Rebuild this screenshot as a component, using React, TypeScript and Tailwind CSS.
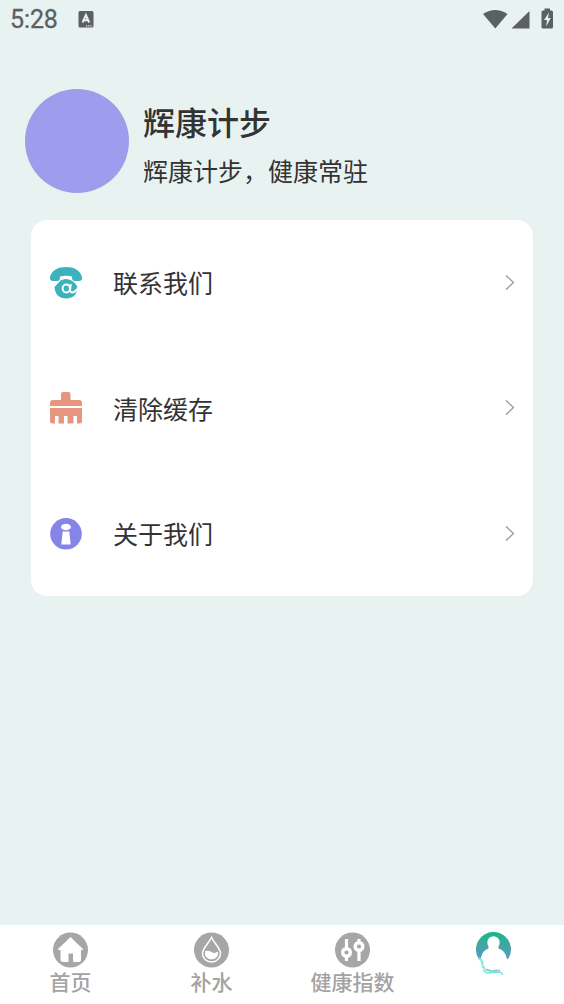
import type { ReactNode } from "react";

function StatusBar() {
  return (
    <header className="flex h-10 shrink-0 items-center justify-between pl-[10px] pr-[10px] text-[#5b6160]">
      <div className="flex items-center gap-5">
        <span className="font-[Roboto,sans-serif] text-[25px] leading-10 tracking-[-0.1px] [-webkit-text-stroke:0.3px_#5b6160]">5:28</span>
        <svg width="16" height="18" viewBox="0 0 16 18">
          <rect x="0.5" y="0" width="15" height="16.5" rx="1.5" fill="currentColor" />
          <path d="M4.6 11.5L7.9 4L11.2 11.5M5.7 9.200H10.1" fill="none" stroke="#e8f2f1" strokeWidth="2" />
          <path d="M8 14.8H14" stroke="#e8f2f1" strokeWidth="1.3" strokeDasharray="1.2 1" />
        </svg>
      </div>
      <svg className="mb-[3px]" width="71" height="22" viewBox="0 0 71 22" fill="currentColor">
        <path d="M0 6Q12.300-2 24.500 6L12.300 20.500Z" />
        <path d="M46.500 3V20.500H28.500Z" />
        <path d="M61.500 0.500H67V2.500H68.500Q70 2.500 70 4V19Q70 20.500 68.500 20.500H60Q58.500 20.500 58.500 19V4Q58.500 2.500 60 2.500H61.500Z" />
        <path d="M66 4.500L61 12H64L63.200 18.500L67.700 10H65Z" fill="#e8f2f1" />
      </svg>
    </header>
  );
}

function PhoneIcon() {
  return (
    <svg width="32" height="32" viewBox="0 0 32 32">
      <path d="M0 10C2 3 8 0 16 0S30 3 32 10C32.400 13 31 14 29 14H25C22.500 14 22 12.500 22 9.500Q16 8 10 9.500C10 12.500 9.500 14 7 14H3C1 14-.4 13 0 10Z" fill="#3bb3bd" />
      <path d="M10.500 13.500Q16 10.500 21.500 13.500Q26.500 16 27.500 21C27 28 22.500 31.500 16 31.500S5 27.500 4.500 20Z" fill="#3bb3bd" />
      <path d="M20.800 17L20 23.500Q20.800 26.300 24 25Q27 23.500 28.500 20.500" fill="none" stroke="#fff" strokeWidth="2" />
      <ellipse cx="16.300" cy="21.500" rx="3.700" ry="3.900" fill="none" stroke="#fff" strokeWidth="2" />
    </svg>
  );
}

function BrushIcon() {
  return (
    <svg width="32" height="32" viewBox="0 0 32 32" fill="#e6957f">
      <path d="M11 8V2Q11 0 13 0H18.500Q20.500 0 20.500 2V8H29Q32 8 32 11V14H0V11Q0 8 3 8Z" />
      <path d="M0 16H32V29Q32 31.500 29.500 31.500H27V24H23.500V31.500H17.500V24H14V31.500H8.500V24H5V31.500H2.500Q0 31.500 0 29Z" />
    </svg>
  );
}

function InfoIcon() {
  return (
    <svg width="32" height="32" viewBox="0 0 32 32">
      <circle cx="16" cy="15.800" r="15.800" fill="#8585e8" />
      <ellipse cx="16" cy="9" rx="5" ry="3.200" fill="#fff" />
      <path d="M12.700 13.500H19.300L20.700 26.500H11.300Z" fill="#fff" />
    </svg>
  );
}

function HomeIcon() {
  return (
    <svg width="36" height="36" viewBox="0 0 36 36">
      <circle cx="17.500" cy="18" r="17.500" fill="#a6a6a6" />
      <path d="M17.500 5.500L30 17.500H27.500V28Q27.500 29.500 26 29.500H20.500V21H15V29.500H9.500Q8 29.500 8 28V17.500H5Z" fill="#fff" stroke="#fff" strokeWidth="1" strokeLinejoin="round" />
    </svg>
  );
}

function WaterIcon() {
  return (
    <svg width="36" height="36" viewBox="0 0 36 36">
      <circle cx="17.500" cy="18" r="17.500" fill="#a6a6a6" />
      <path d="M17.500 5.500C14.500 11.500 8.500 16.500 8.500 21.500A9 8.500 0 0 0 26.500 21.500C26.500 16.500 20.500 11.500 17.500 5.500Z" fill="none" stroke="#fff" strokeWidth="1.500" />
      <path d="M11 19Q14.500 18 17.500 20T24 19.500Q25 27 17.500 27.500Q10 27 11 19Z" fill="#fff" />
    </svg>
  );
}

function HealthIcon() {
  return (
    <svg width="36" height="36" viewBox="0 0 36 36">
      <circle cx="17.500" cy="18" r="17.500" fill="#a6a6a6" />
      <path d="M11.500 7V17M11.500 24V29M24 7V11M24 18V29" stroke="#fff" strokeWidth="3.200" />
      <circle cx="11.500" cy="20.500" r="3.800" fill="none" stroke="#fff" strokeWidth="3.400" />
      <circle cx="24" cy="14.500" r="3.800" fill="none" stroke="#fff" strokeWidth="3.400" />
    </svg>
  );
}

function ProfileIcon() {
  return (
    <svg width="36" height="44" viewBox="0 0 36 44">
      <defs>
        <linearGradient id="profile" x1="0" y1="0" x2="0" y2="1">
          <stop offset="0" stopColor="#18b886" />
          <stop offset="0.450" stopColor="#3fa8a0" />
          <stop offset="1" stopColor="#5b98cc" />
        </linearGradient>
      </defs>
      <path d="M2.500 26.500A17.500 17.500 0 1 1 32.500 26.500L29 28H6Z" fill="url(#profile)" />
      <circle cx="17.500" cy="10.500" r="6.200" fill="#fff" />
      <path d="M12.500 14H22.500V16.500Q29 18 31 27L26 39H11L4.500 27Q6.500 18 12.500 16.500Z" fill="#fff" />
      <path d="M2.500 26L6 29L6.500 34L9.500 38" fill="none" stroke="#7ce9df" strokeWidth="2.200" strokeDasharray="4 0.500" />
      <path d="M7 38L11 41L24 40L27 42.500" fill="none" stroke="#70e5dc" strokeWidth="1.500" />
      <path d="M10 37.500L15 39L24 38.500" fill="none" stroke="#84cfc0" strokeWidth="2" strokeDasharray="6 0.500" />
    </svg>
  );
}

function MenuRow({ icon, label }: { icon: ReactNode; label: string }) {
  return (
    <button className="flex h-[125.5px] w-full items-center pl-[19px] pr-[18px] text-left">
      {icon}
      <span className="ml-[31px] flex-1 pb-[1px] text-[25px] leading-9">{label}</span>
      <svg width="10" height="16" viewBox="0 0 10 16" fill="none" stroke="#999" strokeWidth="1.3">
        <path d="M1 0.500L8.500 7.500L1 14.500" />
      </svg>
    </button>
  );
}

function Tab({ icon, label }: { icon: ReactNode; label?: string }) {
  return (
    <button className="flex flex-1 flex-col items-center pt-[7px] text-[21px] font-medium leading-[26px] text-[#a3a3a3]">
      {icon}
      {label && <span>{label}</span>}
    </button>
  );
}

export default function App() {
  return (
    <div className="flex h-[1004px] w-[564px] flex-col overflow-hidden bg-[#e8f2f1] font-['Noto_Sans_CJK_SC',sans-serif] text-[#333]">
      <StatusBar />

      {/* Account header */}
      <section className="mt-[49px] flex h-[104px] items-center pl-[25px]">
        <div className="size-[104px] rounded-full bg-[#9c9ded]" />
        <div className="ml-[14px] pt-[3px]">
          <h1 className="text-[32px] font-medium leading-[46px]">辉康计步</h1>
          <p className="mt-[8px] text-[25px] leading-9">辉康计步，健康常驻</p>
        </div>
      </section>

      {/* Settings */}
      <main className="mx-[31px] mt-[27px] h-[376px] rounded-2xl bg-white">
        <MenuRow icon={<PhoneIcon />} label="联系我们" />
        <MenuRow icon={<BrushIcon />} label="清除缓存" />
        <MenuRow icon={<InfoIcon />} label="关于我们" />
      </main>

      <nav className="mt-auto flex h-[79px] items-start bg-white">
        <Tab icon={<HomeIcon />} label="首页" />
        <Tab icon={<WaterIcon />} label="补水" />
        <Tab icon={<HealthIcon />} label="健康指数" />
        <Tab icon={<ProfileIcon />} />
      </nav>
    </div>
  );
}
